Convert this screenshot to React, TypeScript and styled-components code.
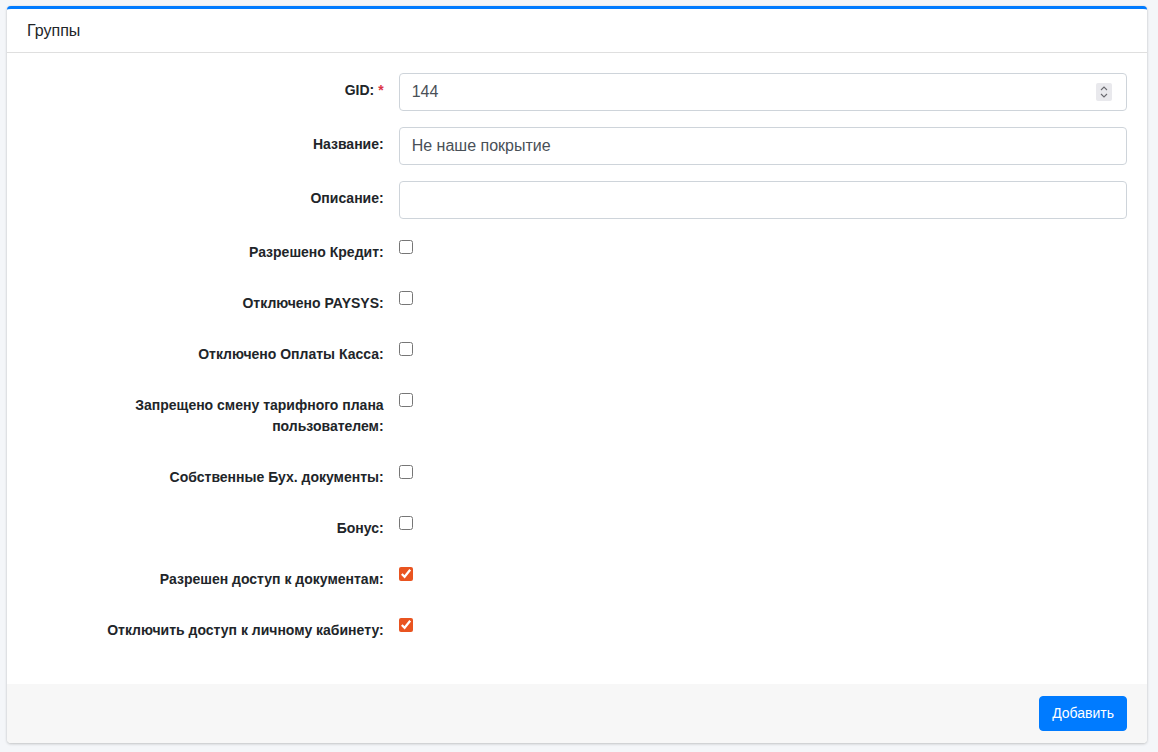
import React from "react";
import styled, { createGlobalStyle } from "styled-components";

const GlobalStyle = createGlobalStyle`
  html, body {
    margin: 0;
    padding: 0;
    background: #f4f6f9;
    font-family: "Liberation Sans", Arial, sans-serif;
    color: #212529;
  }
  * {
    box-sizing: border-box;
  }
`;

const SPage = styled.div`
  padding: 6px 11px 8px 7px;
`;

const SCard = styled.div`
  background: #fff;
  border-top: 3px solid #007bff;
  border-radius: 4px;
  box-shadow: 0 0 1px rgba(0, 0, 0, 0.125), 0 1px 3px rgba(0, 0, 0, 0.2);
  overflow: hidden;
`;

const SHeader = styled.div`
  padding: 12px 20px;
  border-bottom: 1px solid rgba(0, 0, 0, 0.125);
`;

const STitle = styled.h3`
  margin: 0;
  font-size: 16px;
  font-weight: 400;
  line-height: 19px;
  color: #212529;
`;

const SBody = styled.div`
  padding: 20px 20px 20px;
`;

const SRow = styled.div`
  display: flex;
  margin: 0 -7.5px 16px;
`;

const SLabel = styled.label`
  flex: 0 0 33.3333%;
  max-width: 33.3333%;
  padding: 7px 7.5px;
  text-align: right;
  font-size: 14px;
  font-weight: 700;
  line-height: 21px;
  color: #212529;
`;

const SRequired = styled.span`
  color: #dc3545;
  margin-left: 4px;
`;

const SField = styled.div`
  flex: 0 0 66.6667%;
  max-width: 66.6667%;
  padding: 0 7.5px;
  position: relative;
`;

const SInput = styled.input`
  display: block;
  width: 100%;
  height: 38px;
  padding: 6px 12px;
  font-family: inherit;
  font-size: 16px;
  line-height: 24px;
  color: #495057;
  background: #fff;
  border: 1px solid #ced4da;
  border-radius: 4px;
  outline: none;
`;

const SSpinner = styled.span`
  position: absolute;
  right: 22px;
  top: 10px;
  width: 16px;
  height: 18px;
  background: #e9e9ed;
  border-radius: 2px;
  display: flex;
  align-items: center;
  justify-content: center;
`;

const SCheckWrap = styled.div`
  flex: 0 0 66.6667%;
  max-width: 66.6667%;
  padding: 5px 7.5px 0;
`;

const SCheckbox = styled.input`
  display: block;
  width: 14px;
  height: 14px;
  margin: 0;
  accent-color: #e95420;
`;

const SFooter = styled.div`
  background: #f7f7f7;
  padding: 12px 20px;
  display: flex;
  justify-content: flex-end;
`;

const SButton = styled.button`
  font-family: inherit;
  font-size: 14px;
  line-height: 21px;
  padding: 6px 12px;
  color: #fff;
  background: #007bff;
  border: 1px solid #007bff;
  border-radius: 4px;
  cursor: pointer;
`;

const checks: { label: React.ReactNode; checked: boolean }[] = [
  { label: "Разрешено Кредит:", checked: false },
  { label: "Отключено PAYSYS:", checked: false },
  { label: "Отключено Оплаты Касса:", checked: false },
  {
    label: (
      <>
        Запрещено смену тарифного плана
        <br />
        пользователем:
      </>
    ),
    checked: false,
  },
  { label: "Собственные Бух. документы:", checked: false },
  { label: "Бонус:", checked: false },
  { label: "Разрешен доступ к документам:", checked: true },
  { label: "Отключить доступ к личному кабинету:", checked: true },
];

export default function App() {
  return (
    <SPage>
      <GlobalStyle />
      <SCard>
        <SHeader>
          <STitle>Группы</STitle>
        </SHeader>
        <SBody>
          <SRow>
            <SLabel>
              GID:<SRequired>*</SRequired>
            </SLabel>
            <SField>
              <SInput defaultValue="144" />
              <SSpinner>
                <svg width="10" height="14" viewBox="0 0 10 14" fill="none">
                  <path d="M2 5 L5 2 L8 5" stroke="#6b6b70" strokeWidth="1.1" />
                  <path d="M2 9 L5 12 L8 9" stroke="#6b6b70" strokeWidth="1.1" />
                </svg>
              </SSpinner>
            </SField>
          </SRow>
          <SRow>
            <SLabel>Название:</SLabel>
            <SField>
              <SInput defaultValue="Не наше покрытие" />
            </SField>
          </SRow>
          <SRow>
            <SLabel>Описание:</SLabel>
            <SField>
              <SInput defaultValue="" />
            </SField>
          </SRow>
          {checks.map((c, i) => (
            <SRow key={i}>
              <SLabel>{c.label}</SLabel>
              <SCheckWrap>
                <SCheckbox type="checkbox" defaultChecked={c.checked} />
              </SCheckWrap>
            </SRow>
          ))}
        </SBody>
        <SFooter>
          <SButton>Добавить</SButton>
        </SFooter>
      </SCard>
    </SPage>
  );
}
